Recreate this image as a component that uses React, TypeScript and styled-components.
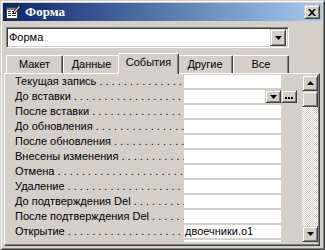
import React from 'react';
import styled, { createGlobalStyle } from 'styled-components';

const GlobalStyle = createGlobalStyle`
  html, body {
    margin: 0;
    padding: 0;
    background: #d4d0c8;
  }
  * {
    box-sizing: border-box;
  }
`;

const Window = styled.div`
  width: 325px;
  height: 250px;
  background: #d4d0c8;
  border: 1px solid;
  border-color: #d4d0c8 #404040 #404040 #d4d0c8;
  box-shadow: inset 1px 1px #fff, inset -1px -1px #808080;
  padding: 2px;
  display: flex;
  flex-direction: column;
  font-family: "Liberation Sans", Tahoma, sans-serif;
  font-size: 11px;
  color: #000;
  overflow: hidden;
`;

const TitleBar = styled.div`
  height: 18px;
  flex: none;
  display: flex;
  align-items: center;
  gap: 4px;
  padding: 0 2px;
  background: linear-gradient(to right, #0a246a, #a6caf0);
`;

const Title = styled.span`
  color: #fff;
  font-family: "Liberation Serif", "Times New Roman", serif;
  font-weight: bold;
  font-size: 13px;
  line-height: 18px;
`;

const raised = `
  border: 1px solid;
  border-color: #d4d0c8 #404040 #404040 #d4d0c8;
  box-shadow: inset 1px 1px #fff, inset -1px -1px #808080;
  background: #d4d0c8;
  display: flex;
  align-items: center;
  justify-content: center;
  flex: none;
`;

const CloseButton = styled.div`
  ${raised}
  margin-left: auto;
  width: 16px;
  height: 14px;
`;

const Combo = styled.div`
  margin: 6px 0 0 3px;
  width: 283px;
  height: 21px;
  flex: none;
  border: 1px solid;
  border-color: #808080 #fff #fff #808080;
  box-shadow: inset 1px 1px #404040, inset -1px -1px #d4d0c8;
  background: #fff;
  padding: 2px;
  display: flex;
  align-items: center;
`;

const ComboText = styled.span`
  flex: 1;
  padding-left: 0;
  line-height: 15px;
`;

const ArrowButton = styled.div<{ $w: number; $h: number }>`
  ${raised}
  width: ${(p) => p.$w}px;
  height: ${(p) => p.$h}px;
`;

const TabStrip = styled.div`
  margin-top: 5px;
  padding-left: 3px;
  height: 20px;
  flex: none;
  display: flex;
  align-items: flex-end;
  position: relative;
  z-index: 1;
`;

const Tab = styled.div<{ $active?: boolean; $w: number }>`
  width: ${(p) => (p.$active ? p.$w + 4 : p.$w)}px;
  height: ${(p) => (p.$active ? 21 : 18)}px;
  margin: ${(p) => (p.$active ? '0 -2px -1px -2px' : '0')};
  align-self: ${(p) => (p.$active ? 'flex-start' : 'flex-end')};
  background: #d4d0c8;
  border-top: 1px solid #fff;
  border-left: 1px solid #fff;
  border-right: 1px solid #404040;
  border-radius: 2px 2px 0 0;
  box-shadow: inset -1px 0 #808080;
  display: flex;
  justify-content: center;
  padding-top: ${(p) => (p.$active ? 2 : 2)}px;
  line-height: 13px;
  position: relative;
  z-index: ${(p) => (p.$active ? 2 : 1)};
`;

const Panel = styled.div`
  flex: 1;
  margin: 0 2px 1px 1px;
  border: 1px solid;
  border-color: #fff #404040 #404040 #fff;
  box-shadow: inset -1px -1px #808080;
  padding: 1px 1px 3px 1px;
  display: flex;
  min-height: 0;
`;

const Rows = styled.div`
  flex: 1;
  overflow: hidden;
  display: flex;
  flex-direction: column;
`;

const Row = styled.div`
  height: 15px;
  flex: none;
  display: flex;
  align-items: flex-start;
`;

const Label = styled.div`
  width: 178px;
  height: 13px;
  padding: 0 5px 0 9px;
  line-height: 13px;
  white-space: nowrap;
  overflow: hidden;
  flex: none;
`;

const Field = styled.div<{ $w: number }>`
  width: ${(p) => p.$w}px;
  height: 13px;
  background: #fff;
  line-height: 13px;
  padding-left: 1px;
  white-space: nowrap;
  overflow: hidden;
  flex: none;
`;

const DotsButton = styled.div`
  ${raised}
  width: 16px;
  height: 13px;
  gap: 1px;
  padding-top: 3px;
`;

const Dot = styled.span`
  width: 2px;
  height: 2px;
  background: #000;
`;

const Scrollbar = styled.div`
  width: 16px;
  flex: none;
  display: flex;
  flex-direction: column;
`;

const ScrollTrack = styled.div`
  flex: 1;
  background-color: #d4d0c8;
  background-image: repeating-conic-gradient(#d4d0c8 0 25%, #fff 0 50%);
  background-size: 2px 2px;
`;

const FormIcon = () => (
  <svg width="16" height="16" viewBox="0 0 16 16" style={{ flex: 'none' }}>
    <rect x="1.5" y="3.5" width="11" height="11" fill="#fff" stroke="#404040" />
    <rect x="2" y="4" width="10" height="2" fill="#808080" />
    <rect x="3" y="7" width="3" height="1" fill="#404040" />
    <rect x="7" y="7" width="4" height="1" fill="#404040" />
    <rect x="3" y="9" width="3" height="1" fill="#404040" />
    <rect x="7" y="9" width="4" height="1" fill="#404040" />
    <rect x="3" y="11" width="3" height="1" fill="#404040" />
    <rect x="7" y="11" width="4" height="1" fill="#404040" />
    <path d="M8 8 L14 1.5 L15.5 3 L9.5 9.5 Z" fill="#d4d0c8" stroke="#000" strokeWidth="0.8" />
    <path d="M8 8 L7.5 10 L9.5 9.5 Z" fill="#000" />
  </svg>
);

const CloseIcon = () => (
  <svg width="8" height="7" viewBox="0 0 8 7">
    <path d="M0 0h2l2 2.2L6 0h2L5 3.5 8 7H6L4 4.8 2 7H0l3-3.5z" fill="#000" />
  </svg>
);

const DownTri = () => (
  <svg width="7" height="4" viewBox="0 0 7 4">
    <path d="M0 0h7L3.5 4z" fill="#000" />
  </svg>
);

const UpTri = () => (
  <svg width="7" height="4" viewBox="0 0 7 4">
    <path d="M0 4h7L3.5 0z" fill="#000" />
  </svg>
);

const tabs = [
  { name: 'Макет', w: 57 },
  { name: 'Данные', w: 57 },
  { name: 'События', w: 57, active: true },
  { name: 'Другие', w: 56 },
  { name: 'Все', w: 56 },
];

const events = [
  { label: 'Текущая запись' },
  { label: 'До вставки', selected: true },
  { label: 'После вставки' },
  { label: 'До обновления' },
  { label: 'После обновления' },
  { label: 'Внесены изменения' },
  { label: 'Отмена' },
  { label: 'Удаление' },
  { label: 'До подтверждения Del' },
  { label: 'После подтверждения Del' },
  { label: 'Открытие', value: 'двоечники.o1' },
  { label: 'Закрытие' },
];

const leader = ' .'.repeat(60);

export default function App() {
  return (
    <>
      <GlobalStyle />
      <Window>
        <TitleBar>
          <FormIcon />
          <Title>Форма</Title>
          <CloseButton>
            <CloseIcon />
          </CloseButton>
        </TitleBar>

        <Combo>
          <ComboText>Форма</ComboText>
          <ArrowButton $w={16} $h={17}>
            <DownTri />
          </ArrowButton>
        </Combo>

        <TabStrip>
          {tabs.map((t) => (
            <Tab key={t.name} $w={t.w} $active={t.active}>
              {t.name}
            </Tab>
          ))}
        </TabStrip>

        <Panel>
          <Rows>
            {events.map((e) => (
              <Row key={e.label}>
                <Label>
                  {e.label}
                  {leader}
                </Label>
                {e.selected ? (
                  <>
                    <Field $w={81} />
                    <ArrowButton $w={16} $h={13}>
                      <DownTri />
                    </ArrowButton>
                    <DotsButton>
                      <Dot />
                      <Dot />
                      <Dot />
                    </DotsButton>
                  </>
                ) : (
                  <Field $w={97}>{e.value}</Field>
                )}
              </Row>
            ))}
          </Rows>
          <Scrollbar>
            <ArrowButton $w={16} $h={16}>
              <UpTri />
            </ArrowButton>
            <ArrowButton $w={16} $h={16} />
            <ScrollTrack />
            <ArrowButton $w={16} $h={16}>
              <DownTri />
            </ArrowButton>
          </Scrollbar>
        </Panel>
      </Window>
    </>
  );
}
